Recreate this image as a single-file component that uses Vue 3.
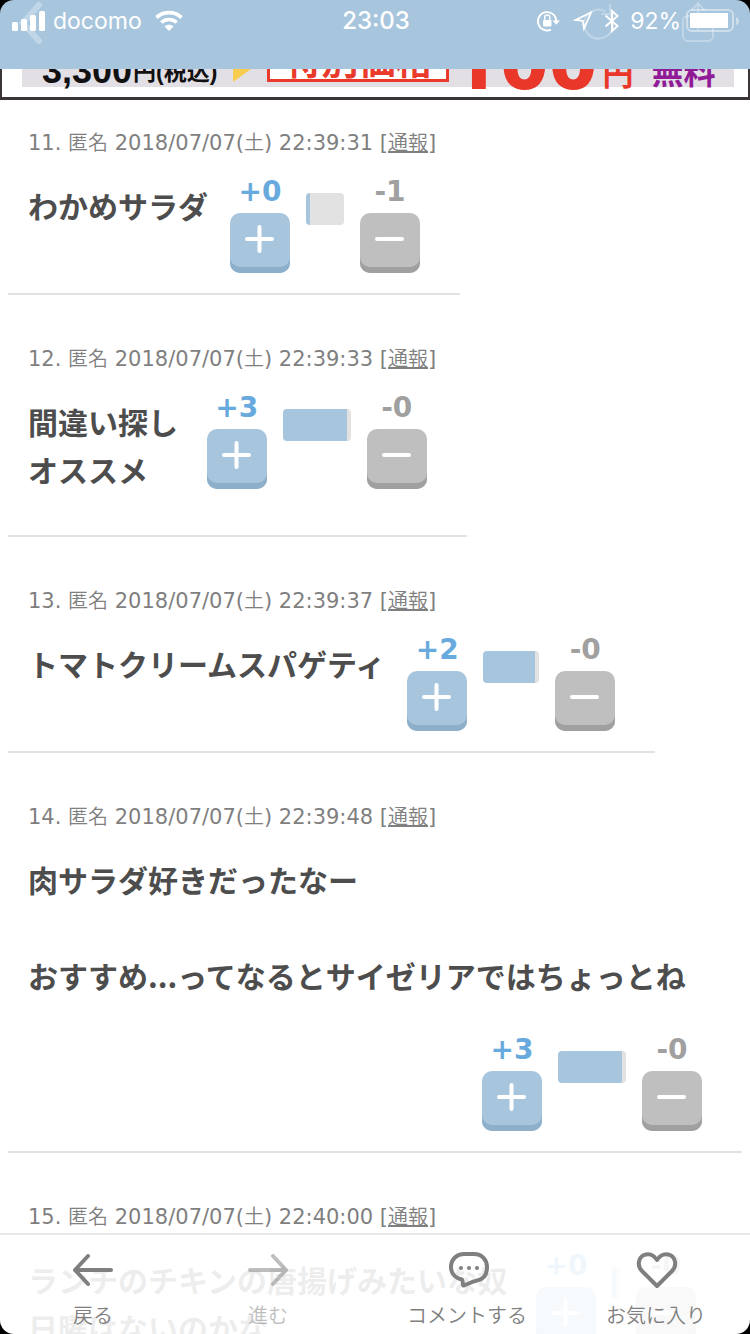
<script setup>
const comments = [
  { id: 11, time: '22:39:31', lines: ['わかめサラダ'], plus: 0, minus: 1, bar: [4, 34] },
  { id: 12, time: '22:39:33', lines: ['間違い探し\u00a0', 'オススメ'], plus: 3, minus: 0, bar: [64, 4] },
  { id: 13, time: '22:39:37', lines: ['トマトクリームスパゲティ'], plus: 2, minus: 0, bar: [52, 4] },
  {
    id: 14,
    time: '22:39:48',
    lines: ['肉サラダ好きだったなー', '', 'おすすめ...ってなるとサイゼリアではちょっとね'],
    plus: 3,
    minus: 0,
    bar: [64, 4],
  },
  {
    id: 15,
    time: '22:40:00',
    lines: ['ランチのチキンの唐揚げみたいな奴\u00a0', '日曜はないのかな'],
    plus: 0,
    minus: 0,
    bar: [4, 4],
  },
]
</script>

<template>
  <div class="screen">
    <header class="status">
      <div class="toolbar" aria-hidden="true">
        <svg width="24" height="46" viewBox="0 0 24 46"><path d="M19 5L3 23L19 41" stroke-width="6" /></svg>
        <span class="spacer"></span>
        <svg width="34" height="46" viewBox="0 0 34 46">
          <path d="M27 15A14.500 14.500 0 1 1 22 11M19 14H27V5" stroke-width="2" />
        </svg>
        <svg class="share" width="34" height="46" viewBox="0 0 34 46">
          <path d="M10 16H7A5 5 0 0 0 2 21V36A5 5 0 0 0 7 41H27A5 5 0 0 0 32 36V21A5 5 0 0 0 27 16H24M17 29V3M11 10L17 3L23 10" stroke-width="2" />
        </svg>
      </div>

      <div class="status-row">
        <div class="left">
          <svg width="34" height="20" viewBox="0 0 34 20" fill="#fff">
            <rect x="0" y="11" width="6" height="9" rx="1.5" />
            <rect x="9" y="8" width="6" height="12" rx="1.5" />
            <rect x="18" y="4" width="6" height="16" rx="1.5" />
            <rect x="27" y="0" width="6" height="20" rx="1.5" />
          </svg>
          <span class="carrier">docomo</span>
          <svg width="28" height="20" viewBox="0 0 28 20">
            <path d="M1.500 6.500C8.500 0 19.500 0 26.500 6.500" fill="none" stroke="#fff" stroke-width="3.800" />
            <path d="M6.300 11.500C10.500 7.500 17.500 7.500 21.700 11.500" fill="none" stroke="#fff" stroke-width="3.600" />
            <path d="M9.500 15.500C12 13.200 16 13.200 18.500 15.500L14 20Z" fill="#fff" />
          </svg>
        </div>
        <div class="clock">23:03</div>
        <div class="right">
          <svg width="24" height="22" viewBox="0 0 24 22">
            <path d="M14 19.600A9.200 9.200 0 1 1 19.300 11" fill="none" stroke="#fff" stroke-width="1.800" />
            <path d="M15.500 10.500H23L19.200 14.800Z" fill="#fff" />
            <rect x="6" y="10" width="8.500" height="6.500" rx="1" fill="#fff" />
            <path d="M7.700 10V7.500A2.500 2.500 0 0 1 12.800 7.500V10" fill="none" stroke="#fff" stroke-width="1.500" />
          </svg>
          <svg class="locate" width="20" height="20" viewBox="0 0 20 20">
            <path d="M18 1.500L2.500 9L9.800 9.800L11 17.500Z" fill="none" stroke="#fff" stroke-width="1.800" stroke-linejoin="miter" />
          </svg>
          <svg class="bluetooth" width="16" height="24" viewBox="0 0 16 24">
            <path d="M1.500 6.500L13.500 17L8 22V2L13.500 7L1.500 17.500" fill="none" stroke="#fff" stroke-width="2" />
          </svg>
          <span class="percent">92%</span>
          <svg width="54" height="24" viewBox="0 0 54 24">
            <rect x="1" y="1" width="46" height="21" rx="5" fill="none" stroke="#fff" stroke-opacity=".45" stroke-width="2" />
            <rect x="4" y="4" width="38" height="15" rx="1" fill="#fff" />
            <path d="M50 8Q53 9 53 12T50 16Z" fill="#fff" fill-opacity=".45" />
          </svg>
        </div>
      </div>
    </header>

    <main>
      <a class="banner" href="#">
        <span class="panel">
          <span class="price">3,300</span>
          <span class="unit">円(税込)</span>
          <svg class="arrow" width="22" height="18" viewBox="0 0 22 18"><path d="M0 0H18L0 13Z" fill="#f8cd4f" /></svg>
          <span class="special">特別価格</span>
          <span class="hundred">100</span>
          <span class="yen">円</span>
          <span class="free">無料</span>
        </span>
      </a>

      <article v-for="c in comments" :key="c.id" class="comment">
        <p class="meta">
          {{ c.id }}. <span>匿名</span> 2018/07/07(<span>土</span>) {{ c.time }} [<a href="#">通報</a>]
        </p>
        <div class="content">
          <p class="body">
            <template v-for="(line, i) in c.lines" :key="i"><br v-if="i" />{{ line }}</template>
          </p>
          <div class="votes">
            <div class="vote plus">
              <span class="count">+{{ c.plus }}</span>
              <button type="button" aria-label="プラス">
                <svg width="60" height="60" viewBox="0 0 60 60"><path d="M17 26H42M29.500 14V38" /></svg>
              </button>
            </div>
            <div class="bar">
              <i class="seg-plus" :style="{ width: c.bar[0] + 'px' }"></i>
              <i class="seg-minus" :style="{ width: c.bar[1] + 'px' }"></i>
            </div>
            <div class="vote minus">
              <span class="count">-{{ c.minus }}</span>
              <button type="button" aria-label="マイナス">
                <svg width="60" height="60" viewBox="0 0 60 60"><path d="M17 26H42" /></svg>
              </button>
            </div>
          </div>
        </div>
      </article>
    </main>

    <nav class="tabs">
      <button type="button">
        <svg width="42" height="42" viewBox="0 0 42 42"><path d="M39 21H3M16 7L3 21L16 35" stroke-width="4" /></svg>
        戻る
      </button>
      <button type="button" disabled>
        <svg width="42" height="42" viewBox="0 0 42 42"><path d="M3 21H39M26 7L39 21L26 35" stroke-width="4" /></svg>
        進む
      </button>
      <button type="button">
        <svg class="bubble" width="42" height="42" viewBox="0 0 42 42">
          <path d="M18 5H28C36 5 41 11 41 18C41 26 37 30.500 31 31.500C26 32.500 22 35 18 36.500C16 37 17.500 33 16 30.500C9 29 5 24 5 18C5 10 11 5 18 5Z" stroke-width="4" />
          <g fill="#7f7f7f"><circle cx="15" cy="19" r="2" /><circle cx="23" cy="19" r="2" /><circle cx="31" cy="19" r="2" /></g>
        </svg>
        コメントする
      </button>
      <button type="button">
        <svg width="42" height="42" viewBox="0 0 42 42">
          <path d="M22 37L7 22C2 17 3 9 9 6C14 4 19 6 22 11C25 6 30 4 35 6C41 9 42 17 37 22Z" stroke-width="4" />
        </svg>
        お気に入り
      </button>
    </nav>
    <div class="corners"></div>
  </div>
</template>

<style>
html,
body {
  background: #fff;
}
</style>

<style scoped>
.screen {
  position: relative;
  height: 100vh;
  overflow: hidden;
  background: #fff;
  color: #7f7f7f;
  font-family: "DejaVu Sans", "Noto Sans CJK JP", sans-serif;
}
p {
  margin: 0;
}
svg {
  display: block;
  flex: none;
  overflow: visible;
}
button {
  border: 0;
  padding: 0;
  font: inherit;
  color: inherit;
}
.status {
  position: relative;
  height: 69px;
  background: #a7c5dd;
  color: #fff;
  font-family: Inter, sans-serif;
  font-size: 24px;
}
.toolbar {
  position: absolute;
  inset: 0 35px auto 20px;
  display: flex;
  opacity: 0.3;
}
.toolbar path {
  fill: none;
  stroke: #fff;
  stroke-linecap: round;
}
.spacer {
  flex: 1;
}
.share {
  margin-left: 64px;
}
.status-row {
  position: relative;
  display: grid;
  grid-template-columns: 1fr auto 1fr;
  align-items: center;
  height: 41px;
  padding: 0 10px 0 12px;
}
.left,
.right {
  display: flex;
  align-items: center;
}
.left {
  gap: 7px;
}
.carrier,
.percent {
  font-size: 23px;
}
.carrier {
  margin-right: 6px;
}
.clock {
  font-weight: 500;
}
.right {
  justify-content: flex-end;
}
.locate {
  margin-left: 12px;
}
.bluetooth {
  margin-left: 11px;
}
.percent {
  margin: 0 5px 0 10px;
}
.banner {
  display: block;
  height: 31px;
  box-sizing: border-box;
  border: solid #3a3638;
  border-width: 0 2px 3px;
  padding: 0 14px 10px 20px;
  color: #111;
  text-decoration: none;
  font-family: "Liberation Sans", "Noto Sans CJK JP", sans-serif;
  font-weight: bold;
  overflow: hidden;
}
.panel {
  display: flex;
  align-items: flex-end;
  height: 18px;
  padding-left: 20px;
  background: #e2dfe5;
  white-space: nowrap;
}
.price {
  font-size: 36px;
  line-height: 36px;
  margin-bottom: -2px;
}
.unit {
  font-size: 23px;
  line-height: 30px;
  margin: 0 16px 0 1px;
}
.special {
  margin: 0 0 5px 12px;
  border: 3px solid #e93a2c;
  padding: 0 14px;
  background: #fff;
  color: #e93a2c;
  font-size: 37px;
  line-height: 32px;
}
.hundred {
  margin: 0 0 -16px 2px;
  color: #e9382a;
  font-family: Roboto, sans-serif;
  font-weight: 900;
  font-size: 84px;
  line-height: 84px;
}
.yen {
  margin: 0 0 -8px 5px;
  color: #e9382a;
  font-size: 31px;
  line-height: 40px;
}
.free {
  margin: 0 0 -6px 18px;
  color: #911a97;
  font-size: 32px;
  line-height: 40px;
}
.comment {
  width: fit-content;
  max-width: calc(100% - 16px);
  box-sizing: border-box;
  margin: 0 8px;
  padding: 44px 20px 20px;
  border-bottom: 2px solid #e2e2e2;
}
.banner + .comment {
  padding-top: 23px;
}
.meta {
  font-size: 21px;
  line-height: 40px;
  white-space: nowrap;
}
.meta span,
.meta a {
  color: inherit;
  font-family: "Noto Sans CJK JP", sans-serif;
  font-size: 20px;
  font-weight: 350;
  line-height: 20px;
}
.content {
  display: flex;
  flex-wrap: wrap;
  align-items: flex-start;
  justify-content: flex-end;
}
.body {
  margin: 18px auto 22px 0;
  padding-right: 22px;
  color: #4d4d4d;
  font-family: "Noto Sans CJK JP", sans-serif;
  font-size: 30px;
  font-weight: bold;
  line-height: 48px;
}
.votes {
  display: flex;
  gap: 16px;
  margin: 10px 20px 0 0;
}
.vote {
  width: 60px;
  text-align: center;
}
.count {
  display: block;
  height: 40px;
  font-size: 28px;
  font-weight: bold;
  line-height: 38px;
}
.vote button {
  display: block;
  width: 60px;
  height: 60px;
  border-radius: 10px;
}
.vote path {
  stroke: #fff;
  stroke-width: 4;
  stroke-linecap: round;
}
.plus .count {
  color: #68aadd;
}
.plus button {
  background: #a7c5dd;
  box-shadow: inset 0 -6px #8eafc9;
}
.minus .count {
  color: #a0a0a0;
}
.minus button {
  background: #bfbfbf;
  box-shadow: inset 0 -6px #a0a0a0;
}
.bar {
  display: flex;
  height: 32px;
  margin-top: 20px;
  border-radius: 4px;
  overflow: hidden;
}
.seg-plus {
  background: #a7c5dd;
}
.seg-minus {
  background: #e2e2e2;
}
.tabs {
  position: absolute;
  inset: auto 0 0;
  display: grid;
  grid-template-columns: 186fr 164fr 234fr 144fr;
  height: 99px;
  padding-right: 22px;
  border-top: 2px solid #e8e8e8;
  background: rgba(255, 255, 255, 0.9);
}
.tabs button {
  display: flex;
  flex-direction: column;
  align-items: center;
  gap: 9px;
  padding-top: 14px;
  background: none;
  font-family: "Noto Sans CJK JP", sans-serif;
  font-size: 20px;
  font-weight: 350;
  line-height: 30px;
  white-space: nowrap;
}
.tabs button:disabled {
  opacity: 0.5;
}
.tabs path {
  fill: none;
  stroke: #7f7f7f;
  stroke-linecap: round;
  stroke-linejoin: round;
}
.corners {
  position: absolute;
  inset: 0;
  border-radius: 14px;
  box-shadow: 0 0 0 20px #000;
  pointer-events: none;
}
</style>
